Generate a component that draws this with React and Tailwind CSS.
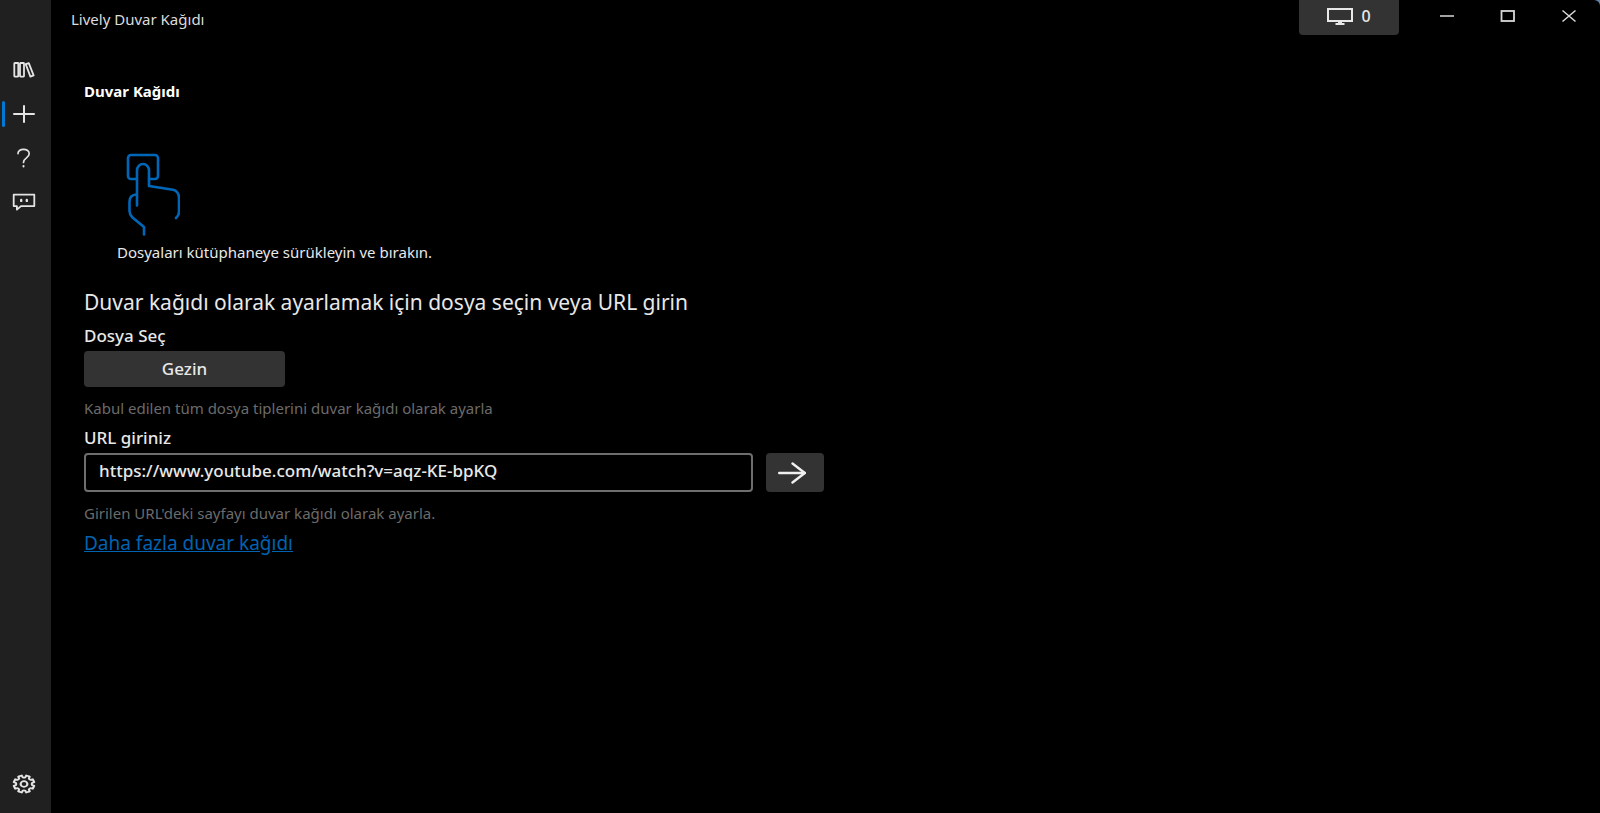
import React from "react";

function Stroke({ className, viewBox, width = 1.7, children }) {
  return (
    <svg
      className={className}
      viewBox={viewBox}
      fill="none"
      stroke="currentColor"
      strokeWidth={width}
      strokeLinecap="round"
      strokeLinejoin="round"
      aria-hidden="true"
    >
      {children}
    </svg>
  );
}

function LibraryIcon() {
  return (
    <Stroke className="h-4 w-[22px]" viewBox="0 0 22 16" width={1.8}>
      <rect x="1.3" y="1" width="4" height="13.6" rx="0.5" />
      <rect x="7" y="1" width="4" height="13.6" rx="0.5" />
      <path d="M12.7 2.1 15.800 1.1 20.6 13.4 17.4 14.6Z" />
    </Stroke>
  );
}

function PlusIcon() {
  return (
    <Stroke className="h-[18px] w-[22px]" viewBox="0 0 22 18" width={2}>
      <path d="M1 9h20" />
      <path d="M11 1v16" />
    </Stroke>
  );
}

function HelpIcon() {
  return (
    <Stroke className="h-5 w-[22px]" viewBox="0 0 22 20" width={1.7}>
      <path d="M5 5.6C5 3 7.3 1.3 10.500 1.3s5.700 1.700 5.700 4.400c0 2-1.300 3.100-3 4.400-1.700 1.200-2.700 2.100-2.700 4.300" />
      <path d="M10.500 18v.4" strokeWidth="2" />
    </Stroke>
  );
}

function FeedbackIcon() {
  return (
    <Stroke className="h-[18px] w-6" viewBox="0 0 24 18" width={1.8}>
      <path d="M1.700 1.700h20.600v11.400H9L4.900 16.600V13.100H1.700Z" />
      <path d="M9.200 7v.9M14.800 7v.9" strokeWidth="2.400" />
    </Stroke>
  );
}

function GearIcon() {
  return (
    <svg
      className="h-5 w-6"
      viewBox="0 0 24 24"
      preserveAspectRatio="none"
      fill="none"
      stroke="currentColor"
      strokeWidth="2.100"
      strokeLinejoin="round"
      aria-hidden="true"
    >
      <path d="M9.800 1.800 10.600 3.800Q12 4.800 13.400 3.800L14.200 1.800 17.700 3.200 16.900 5.300Q17.100 6.900 18.700 7.100L20.800 6.300 22.200 9.800 20.200 10.600Q19.200 12 20.200 13.400L22.200 14.200 20.800 17.700 18.700 16.900Q17.100 17.100 16.900 18.700L17.700 20.800 14.200 22.200 13.400 20.200Q12 19.200 10.600 20.200L9.800 22.200 6.300 20.800 7.100 18.700Q6.900 17.100 5.300 16.900L3.200 17.700 1.800 14.200 3.800 13.400Q4.800 12 3.800 10.600L1.800 9.800 3.200 6.300 5.300 7.100Q6.900 6.900 7.100 5.300L6.300 3.200Z" />
      <circle cx="12" cy="12" r="3.400" />
    </svg>
  );
}

function MonitorIcon() {
  return (
    <svg className="h-[18px] w-[26px]" viewBox="0 0 26 18" fill="none" stroke="currentColor" aria-hidden="true">
      <rect x="1" y="2" width="24" height="12" strokeWidth="2" />
      <path d="M13 14v2.500" strokeWidth="4" />
      <path d="M8.500 17h9" strokeWidth="2" />
    </svg>
  );
}

function TouchIcon() {
  return (
    <Stroke className="h-[83px] w-[54px] text-[#0067b8]" viewBox="0 0 54 83" width={2.6}>
      <path d="M10.500 26H5a3 3 0 0 1-3-3V5a3 3 0 0 1 3-3h24a3 3 0 0 1 3 3v18a3 3 0 0 1-3 3h-6" />
      <path d="M11 52.500V17.500a6 6.500 0 0 1 12 0V33l24 3.800a7 8 0 0 1 6 8V59q0 3-3 6" />
      <path d="M10 41.500c-4 .5-6.500 3-6.500 7V58c0 2.500 1 4.500 3 6.500L18 74v7.500" />
    </Stroke>
  );
}

function ArrowIcon() {
  return (
    <Stroke className="h-[22px] w-7" viewBox="0 0 28 22" width={2.4}>
      <path d="M1.200 11h25.600" />
      <path d="M14.500 1.500 26.800 11 14.500 20.500" />
    </Stroke>
  );
}

function NavButton({ label, active, children }) {
  return (
    <button
      type="button"
      aria-label={label}
      aria-current={active ? "page" : undefined}
      className="flex h-11 w-full items-center pl-[2px] text-[#e4e4e4]"
    >
      <span className={active ? "h-[26px] w-[3px] rounded-full bg-[#0078d4]" : "h-[26px] w-[3px]"} />
      <span className="flex flex-1 justify-center pr-2">{children}</span>
    </button>
  );
}

function WindowButton({ label, children }) {
  return (
    <button type="button" aria-label={label} className="flex h-8 w-[61px] items-center justify-center text-[#d8d8d8]">
      <svg className="h-[14px] w-4" viewBox="0 0 16 14" fill="none" stroke="currentColor" strokeWidth="1.500" aria-hidden="true">
        {children}
      </svg>
    </button>
  );
}

export default function App() {
  return (
    <div className="min-h-screen bg-[#5f83a3] font-['Noto_Sans','Open_Sans',sans-serif] text-[#e8e8e8]">
      <div className="flex min-h-screen overflow-hidden rounded-tr-md bg-black">
        <nav aria-label="Menü" className="flex w-[51px] shrink-0 flex-col bg-[#202020] pt-12 pb-[7px]">
          <NavButton label="Kütüphane"><LibraryIcon /></NavButton>
          <NavButton label="Duvar kağıdı ekle" active><PlusIcon /></NavButton>
          <NavButton label="Yardım"><HelpIcon /></NavButton>
          <NavButton label="Geri bildirim"><FeedbackIcon /></NavButton>
          <div className="mt-auto">
            <NavButton label="Ayarlar"><GearIcon /></NavButton>
          </div>
        </nav>

        <div className="flex min-w-0 flex-1 flex-col">
          <header className="flex items-start justify-between pr-px pl-5">
            <h1 className="pt-[9px] text-[15px] leading-5 text-[#dcdcdc]">Lively Duvar Kağıdı</h1>
            <div className="flex">
              <button type="button" className="mr-[17px] flex h-[35px] w-[100px] items-center justify-center gap-2 rounded-b-sm bg-[#333333] pb-1 text-base font-medium">
                <MonitorIcon />
                <span>0</span>
              </button>
              <WindowButton label="Simge durumuna küçült"><path d="M1 7h14" /></WindowButton>
              <WindowButton label="Ekranı kapla"><rect x="1.500" y="2" width="12.500" height="10" strokeWidth="1.800" /></WindowButton>
              <WindowButton label="Kapat"><path d="M1.500 1.500l13 11M14.500 1.500l-13 11" /></WindowButton>
            </div>
          </header>

          <main className="flex flex-col items-start pt-[46px] pr-8 pl-[33px]">
            <h2 className="text-[15px] leading-5 font-bold text-white">Duvar Kağıdı</h2>

            <div className="mt-[52px] pl-[33px]">
              <div className="pl-[9px]"><TouchIcon /></div>
              <p className="mt-[6px] text-[15px] leading-5">Dosyaları kütüphaneye sürükleyin ve bırakın.</p>
            </div>

            <h3 className="mt-[26px] text-[21px] leading-7">Duvar kağıdı olarak ayarlamak için dosya seçin veya URL girin</h3>

            <label htmlFor="browse" className="mt-2 text-[17px] leading-6 font-medium">Dosya Seç</label>
            <button id="browse" type="button" className="mt-[3px] h-9 w-[201px] rounded-sm bg-[#333333] text-[17px] font-medium">Gezin</button>
            <p className="mt-[11px] text-[15px] leading-5 text-[#6b6b6b]">Kabul edilen tüm dosya tiplerini duvar kağıdı olarak ayarla</p>

            <label htmlFor="url" className="mt-2 text-[17px] leading-6 font-medium">URL giriniz</label>
            <form className="mt-[3px] flex w-full max-w-[740px] gap-[13px]" onSubmit={(e) => e.preventDefault()}>
              <input
                id="url"
                type="text"
                defaultValue="https://www.youtube.com/watch?v=aqz-KE-bpKQ"
                className="h-[39px] min-w-0 flex-1 rounded-sm border-2 border-[#6e6e6e] bg-black px-[13px] pb-1 text-[17px] font-medium outline-none"
              />
              <button type="submit" aria-label="Git" className="flex w-[58px] items-center justify-center rounded-sm bg-[#333333] pr-[7px] text-[#f0f0f0]">
                <ArrowIcon />
              </button>
            </form>
            <p className="mt-[11px] text-[15px] leading-5 text-[#6b6b6b]">Girilen URL'deki sayfayı duvar kağıdı olarak ayarla.</p>
            <a href="#galeri" className="mt-2 text-[19px] leading-6 text-[#0063b1] underline">Daha fazla duvar kağıdı</a>
          </main>
        </div>
      </div>
    </div>
  );
}
